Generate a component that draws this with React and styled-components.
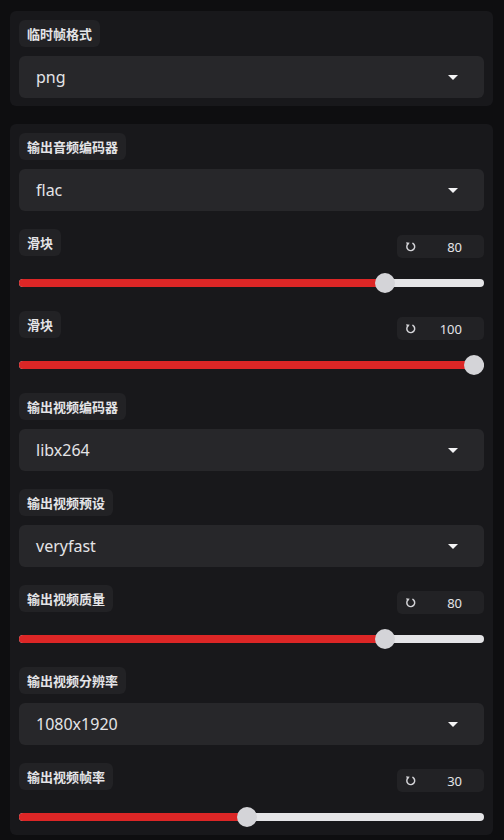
import React from "react";
import styled, { createGlobalStyle } from "styled-components";

const GlobalStyle = createGlobalStyle`
    html, body {
        margin: 0;
        padding: 0;
        background-color: #0e0e10;
        font-family: "Noto Sans", "Noto Sans CJK SC", sans-serif;
    }
`;

const Page = styled.div`
    width: 504px;
    height: 840px;
    overflow: hidden;
    padding: 11px 11px 0 10px;
    box-sizing: border-box;
    display: flex;
    flex-direction: column;
    gap: 18px;
`;

const Panel = styled.div`
    background-color: #18181b;
    border-radius: 6px;
    padding: 9px 9px 8px 9px;
    display: flex;
    flex-direction: column;
    gap: 18px;
`;

const Field = styled.div`
    display: flex;
    flex-direction: column;
    gap: 9px;
`;

const Label = styled.span`
    align-self: flex-start;
    height: 27px;
    line-height: 27px;
    padding: 0 8px;
    border-radius: 6px;
    background-color: #222225;
    color: #e4e4e7;
    font-family: "Noto Sans CJK SC", sans-serif;
    font-size: 13px;
    font-weight: 700;
`;

const Select = styled.div`
    height: 42px;
    border-radius: 6px;
    background-color: #27272a;
    display: flex;
    align-items: center;
    justify-content: space-between;
    padding: 0 26px 0 17px;
    color: #e4e4e7;
    font-size: 16px;
`;

const Caret = styled.span`
    width: 0;
    height: 0;
    border-left: 5px solid transparent;
    border-right: 5px solid transparent;
    border-top: 5px solid #f4f4f5;
`;

const SliderHead = styled.div`
    display: flex;
    justify-content: space-between;
    align-items: flex-start;
    height: 29px;
`;

const NumberBox = styled.div`
    margin-top: 6px;
    width: 87px;
    height: 23px;
    border-radius: 5px;
    background-color: #222225;
    display: flex;
    align-items: center;
    justify-content: space-between;
    padding: 0 22px 0 8px;
    box-sizing: border-box;
    color: #e4e4e7;
    font-size: 13px;
`;

const Track = styled.div`
    position: relative;
    height: 20px;
    margin-top: 15px;
    display: flex;
    align-items: center;
`;

const Rail = styled.div`
    width: 100%;
    height: 8px;
    border-radius: 4px;
    background-color: #e4e4e7;
    overflow: hidden;
`;

const Fill = styled.div`
    height: 100%;
    background-color: #dc2626;
`;

const Thumb = styled.div`
    position: absolute;
    top: 0;
    width: 20px;
    height: 20px;
    margin-left: -10px;
    border-radius: 50%;
    background-color: #d4d4d8;
`;

const ResetIcon = () => (
    <svg width="11" height="11" viewBox="0 0 12 12" fill="none">
        <path
            d="M3.2 3.2 A4.3 4.3 0 1 0 8.6 2.6"
            stroke="#d4d4d8"
            strokeWidth="1.6"
            strokeLinecap="round"
        />
        <path d="M1.2 1.4 L5.2 1.8 L2.4 5 Z" fill="#d4d4d8" />
    </svg>
);

const SelectField = ({ label, value }) => (
    <Field>
        <Label>{label}</Label>
        <Select>
            {value}
            <Caret />
        </Select>
    </Field>
);

const SliderField = ({ label, value, ratio }) => {
    const pos = `calc(10px + (100% - 20px) * ${ratio})`;
    return (
        <div>
            <SliderHead>
                <Label>{label}</Label>
                <NumberBox>
                    <ResetIcon />
                    <span>{value}</span>
                </NumberBox>
            </SliderHead>
            <Track>
                <Rail>
                    <Fill style={{ width: pos }} />
                </Rail>
                <Thumb style={{ left: pos }} />
            </Track>
        </div>
    );
};

const App = () => {
    return (
        <>
            <GlobalStyle />
            <Page>
                <Panel>
                    <SelectField label="临时帧格式" value="png" />
                </Panel>
                <Panel>
                    <SelectField label="输出音频编码器" value="flac" />
                    <SliderField label="滑块" value="80" ratio={0.8} />
                    <SliderField label="滑块" value="100" ratio={1} />
                    <SelectField label="输出视频编码器" value="libx264" />
                    <SelectField label="输出视频预设" value="veryfast" />
                    <SliderField label="输出视频质量" value="80" ratio={0.8} />
                    <SelectField label="输出视频分辨率" value="1080x1920" />
                    <SliderField label="输出视频帧率" value="30" ratio={0.49} />
                </Panel>
            </Page>
        </>
    );
};

export default App;
